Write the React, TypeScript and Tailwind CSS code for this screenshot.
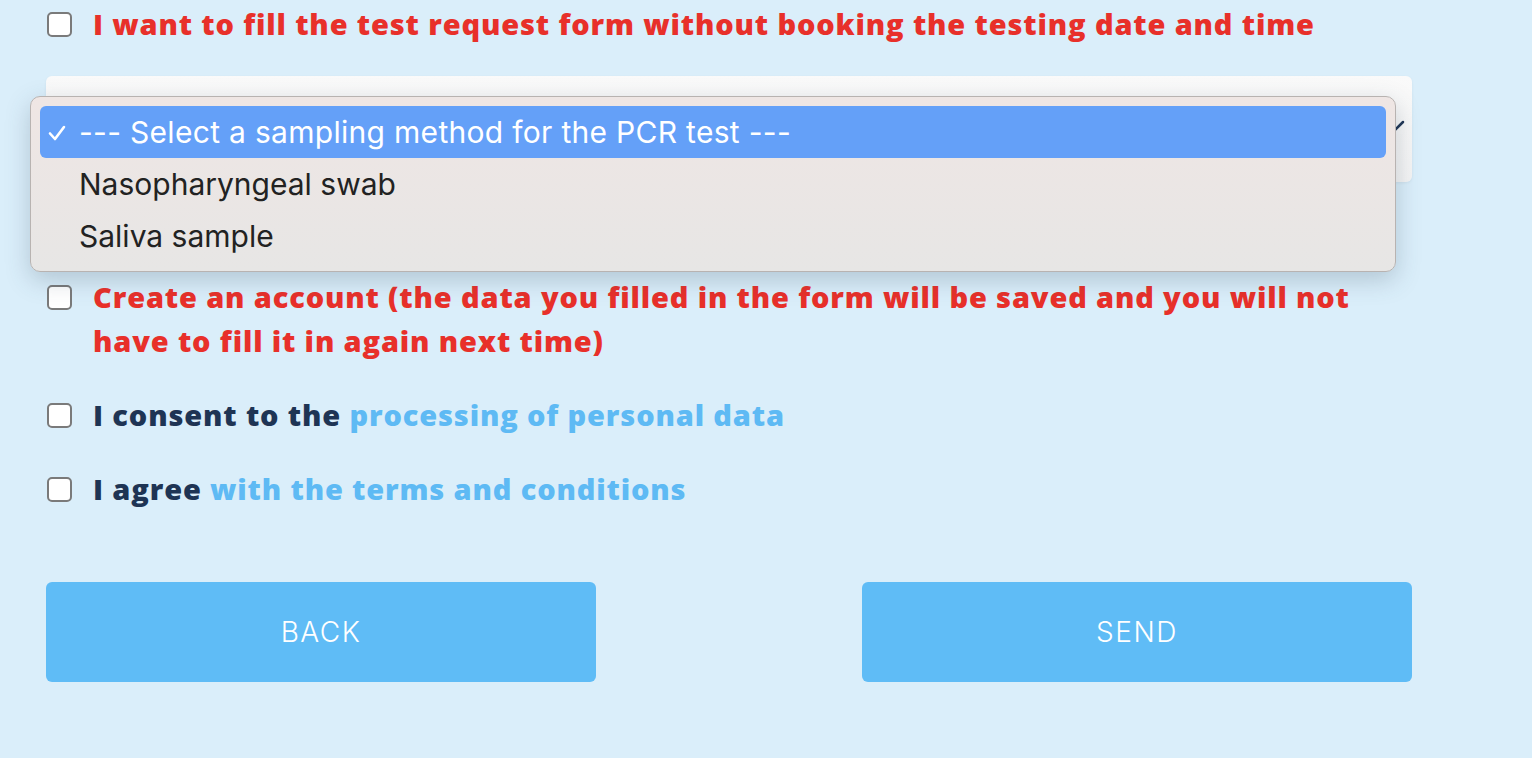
import { useState } from "react";

const heading =
  "font-['Open_Sans',sans-serif] text-[29px] font-extrabold leading-[44px] tracking-[0.85px]";

function Check({ checked, onChange }: { checked: boolean; onChange: () => void }) {
  return (
    <input
      type="checkbox"
      checked={checked}
      onChange={onChange}
      className="mt-[10px] ml-px h-[25px] w-[25px] shrink-0 appearance-none rounded-[5px] border-2 border-[#7a7a7a] bg-white checked:bg-[#5fbcf6]"
    />
  );
}

const options = ["Nasopharyngeal swab", "Saliva sample"];

export default function App() {
  const [checks, setChecks] = useState([false, false, false, false]);
  const toggle = (i: number) =>
    setChecks((prev) => prev.map((v, j) => (j === i ? !v : v)));

  return (
    <div className="min-h-screen bg-[#daeefa] pl-[46px] pt-[2px]">
      <div className="w-[1366px]">
        <div className="flex gap-[21px]">
          <Check checked={checks[0]} onChange={() => toggle(0)} />
          <p className={`${heading} text-[#e8302a]`}>
            I want to fill the test request form without booking the testing date and time
          </p>
        </div>

        <div className="relative mt-[30px] h-[106px] rounded-[6px] bg-gradient-to-b from-[#fafafa] to-[#f4f4f4] shadow-[0_1px_3px_rgba(0,0,0,0.06)]">
          <svg
            className="absolute right-[6px] top-[42px]"
            width="20"
            height="14"
            viewBox="0 0 20 14"
            fill="none"
          >
            <path d="M3 4l7 7 7-7" stroke="#1e3454" strokeWidth="2.5" strokeLinecap="round" />
          </svg>

          <div className="absolute left-[-16px] top-[20px] w-[1366px] rounded-[10px] border border-[#b8b3b1] bg-gradient-to-b from-[#efe6e4] to-[#e7e6e5] p-[9px] shadow-[0_8px_24px_rgba(60,80,100,0.25)] font-['Inter',sans-serif] text-[30px] text-[#222]">
            <div className="relative flex h-[52px] items-center rounded-[6px] bg-[#64a0f8] pl-[39px] tracking-[0.3px] text-white">
              <svg
                className="absolute left-[8px] top-[19px]"
                width="18"
                height="16"
                viewBox="0 0 18 16"
                fill="none"
              >
                <path
                  d="M2 8.5l5 5.5L16 2"
                  stroke="white"
                  strokeWidth="2.6"
                  strokeLinecap="round"
                  strokeLinejoin="round"
                />
              </svg>
              --- Select a sampling method for the PCR test ---
            </div>
            {options.map((o) => (
              <div key={o} className="flex h-[52px] items-center pl-[39px]">
                {o}
              </div>
            ))}
          </div>
        </div>

        <div className="mt-[93px] flex gap-[21px]">
          <Check checked={checks[1]} onChange={() => toggle(1)} />
          <p className={`${heading} max-w-[1300px] text-[#e8302a]`}>
            Create an account (the data you filled in the form will be saved and you will not have to fill it in again next time)
          </p>
        </div>

        <div className="mt-[30px] flex gap-[21px]">
          <Check checked={checks[2]} onChange={() => toggle(2)} />
          <p className={`${heading} text-[#1e3454]`}>
            I consent to the <span className="text-[#5ebaf4]">processing of personal data</span>
          </p>
        </div>

        <div className="mt-[30px] flex gap-[21px]">
          <Check checked={checks[3]} onChange={() => toggle(3)} />
          <p className={`${heading} text-[#1e3454]`}>
            I agree <span className="text-[#5ebaf4]">with the terms and conditions</span>
          </p>
        </div>

        <div className="mt-[71px] flex justify-between">
          <button
            type="button"
            className="h-[100px] w-[550px] rounded-[6px] bg-[#5fbcf6] font-['Inter',sans-serif] text-[28px] font-light uppercase tracking-[1.5px] text-white"
          >
            Back
          </button>
          <button
            type="button"
            className="h-[100px] w-[550px] rounded-[6px] bg-[#5fbcf6] font-['Inter',sans-serif] text-[28px] font-light uppercase tracking-[1.5px] text-white"
          >
            Send
          </button>
        </div>
      </div>
    </div>
  );
}
